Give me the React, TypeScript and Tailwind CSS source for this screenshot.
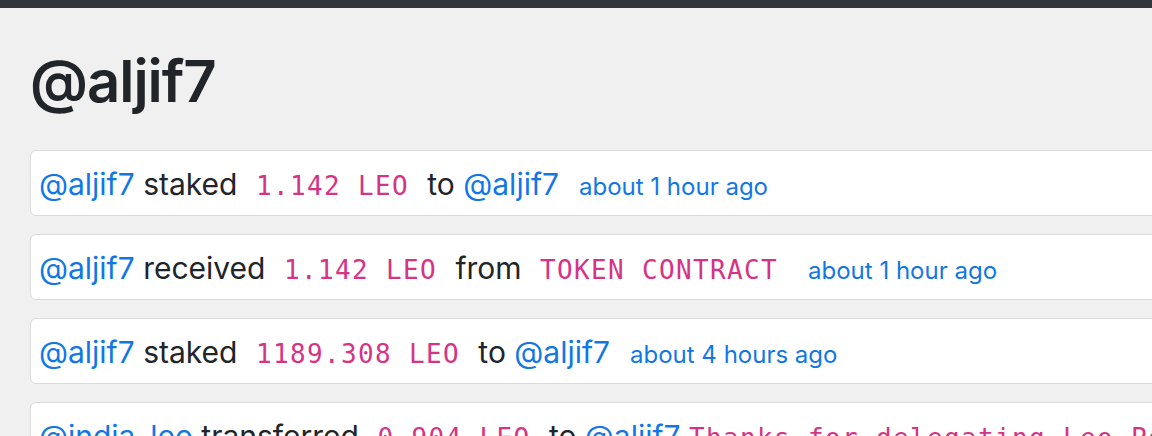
const sans = "font-['Inter','Liberation_Sans',sans-serif]";

type Part =
  | { kind: "user"; text: string }
  | { kind: "word"; text: string }
  | { kind: "code"; text: string }
  | { kind: "memo"; text: string }
  | { kind: "time"; text: string };

const rows: Part[][] = [
  [
    { kind: "user", text: "@aljif7" },
    { kind: "word", text: "staked" },
    { kind: "code", text: "1.142 LEO" },
    { kind: "word", text: "to" },
    { kind: "user", text: "@aljif7" },
    { kind: "time", text: "about 1 hour ago" },
  ],
  [
    { kind: "user", text: "@aljif7" },
    { kind: "word", text: "received" },
    { kind: "code", text: "1.142 LEO" },
    { kind: "word", text: "from" },
    { kind: "code", text: "TOKEN CONTRACT" },
    { kind: "time", text: "about 1 hour ago" },
  ],
  [
    { kind: "user", text: "@aljif7" },
    { kind: "word", text: "staked" },
    { kind: "code", text: "1189.308 LEO" },
    { kind: "word", text: "to" },
    { kind: "user", text: "@aljif7" },
    { kind: "time", text: "about 4 hours ago" },
  ],
  [
    { kind: "user", text: "@india_leo" },
    { kind: "word", text: "transferred" },
    { kind: "code", text: "0.904 LEO" },
    { kind: "word", text: "to" },
    { kind: "user", text: "@aljif7" },
    { kind: "memo", text: "Thanks for delegating Leo Power to @india_leo" },
  ],
];

function Piece({ part }: { part: Part }) {
  // 코드/메모는 모노스페이스 핑크
  if (part.kind === "user")
    return <a className="text-[#1177e6]">{part.text}</a>;
  if (part.kind === "code")
    return (
      <code className="px-[10px] font-['DejaVu_Sans_Mono',monospace] text-[26px] tracking-[1.35px] text-[#d63384] whitespace-pre">
        {part.text}
      </code>
    );
  if (part.kind === "memo")
    return (
      <span className="font-['DejaVu_Sans_Mono',monospace] text-[26px] tracking-[1.35px] text-[#d63384] whitespace-pre">
        {part.text}
      </span>
    );
  if (part.kind === "time")
    return <small className="ml-[20px] text-[24px] text-[#1177e6]">{part.text}</small>;
  return <span>{part.text}</span>;
}

export default function App() {
  return (
    <div className={`h-[436px] w-[1152px] overflow-hidden bg-[#f0f0f0] ${sans} text-[#212529]`}>
      <div className="h-[8px] bg-[#33363d]" />
      <div className="pl-[30px]">
        <h1 className="mt-[38px] mb-[34px] text-[58px] leading-[70px] font-semibold tracking-[-1px]">
          @aljif7
        </h1>
        <div className="flex w-[1200px] flex-col gap-[18px]">
          {rows.map((row, i) => (
            <div
              key={i}
              className="h-[66px] shrink-0 overflow-hidden rounded-[6px] border border-[#dadada] bg-white px-[8px] pt-[15px] text-[30px] leading-[36px] whitespace-nowrap"
            >
              {row.map((p, j) => (
                <span key={j}>
                  {j > 0 && p.kind !== "time" ? " " : ""}
                  <Piece part={p} />
                </span>
              ))}
            </div>
          ))}
        </div>
      </div>
    </div>
  );
}
